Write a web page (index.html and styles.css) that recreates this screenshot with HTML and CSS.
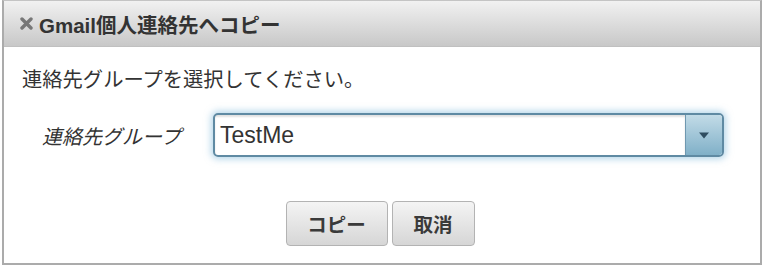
FILE: index.html
```html
<!DOCTYPE html>
<html lang="ja">
<head>
    <meta charset="UTF-8">
    <meta name="viewport" content="width=device-width, initial-scale=1.0">
    <title>Gmail個人連絡先へコピー</title>
    <link rel="stylesheet" href="styles.css">
</head>
<body>
<div class="dialog">
    <!-- Title bar -->
    <div class="dialog-title">
        <svg class="close-icon" width="13" height="13" viewBox="0 0 13 13">
            <path d="M2 2 L11 11 M11 2 L2 11" stroke="#777777" stroke-width="3.4" stroke-linecap="round"/>
        </svg>
        <span>Gmail個人連絡先へコピー</span>
    </div>

    <div class="dialog-body">
        <p class="message">連絡先グループを選択してください。</p>

        <div class="form-row">
            <label class="field-label">連絡先グループ</label>
            <div class="select-box">
                <div class="select-value">TestMe</div>
                <div class="select-arrow">
                    <svg width="12" height="7" viewBox="0 0 12 7">
                        <path d="M1 0.5 L11 0.5 L6 6.5 Z" fill="#2f4d60"/>
                    </svg>
                </div>
            </div>
        </div>

        <div class="button-row">
            <button class="dialog-button btn-copy" type="button">コピー</button>
            <button class="dialog-button btn-cancel" type="button">取消</button>
        </div>
    </div>
</div>
</body>
</html>
```

FILE: styles.css
```css
body {
    margin: 0;
    background-color: #ffffff;
    font-family: "Liberation Sans", "Noto Sans CJK JP", sans-serif;
    color: #333333;
}

.dialog {
    box-sizing: border-box;
    width: 760px;
    height: 265px;
    margin-left: 2px;
    border: 2px solid #ababab;
    border-top: 1px solid #c4c4c4;
    display: flex;
    flex-direction: column;
    background-color: #ffffff;
}

.dialog-title {
    height: 45px;
    flex-shrink: 0;
    display: flex;
    align-items: center;
    gap: 6px;
    padding-left: 16px;
    background: linear-gradient(#f1f1f1, #c8c8c8);
    border-bottom: 1px solid #c0c0c0;
    font-size: 20.5px;
    font-weight: bold;
    color: #333333;
}

.close-icon {
    display: block;
}

.dialog-body {
    padding: 19px 18px 0 18px;
}

.message {
    margin: 0;
    font-size: 20.3px;
    line-height: 28px;
    color: #333333;
}

.form-row {
    display: flex;
    align-items: center;
    margin-top: 19px;
}

.field-label {
    width: 191px;
    padding-left: 20px;
    box-sizing: border-box;
    font-size: 20px;
    font-style: italic;
    color: #333333;
}

.select-box {
    box-sizing: border-box;
    width: 511px;
    height: 44px;
    display: flex;
    border: 2px solid #5f8aa3;
    border-radius: 5px;
    box-shadow: 0 0 7px 2px rgba(120, 180, 215, 0.55);
    overflow: hidden;
}

.select-value {
    flex: 1;
    display: flex;
    align-items: center;
    padding-left: 5px;
    font-size: 23px;
    color: #333333;
    box-shadow: inset 0 2px 2px rgba(0, 0, 0, 0.12);
}

.select-arrow {
    width: 36px;
    display: flex;
    align-items: center;
    justify-content: center;
    border-left: 1px solid #6f98b0;
    background: linear-gradient(#c2dbe7, #80b0c8);
}

.select-arrow svg {
    display: block;
}

.button-row {
    display: flex;
    justify-content: center;
    gap: 4px;
    margin-top: 44px;
    padding-right: 4px;
}

.dialog-button {
    box-sizing: border-box;
    height: 45px;
    border: 1px solid #b3b3b3;
    border-radius: 4px;
    background: linear-gradient(#f4f4f4, #d6d6d6);
    font-family: "Liberation Sans", "Noto Sans CJK JP", sans-serif;
    font-size: 19.5px;
    font-weight: bold;
    color: #3a3a3a;
    cursor: pointer;
}

.btn-copy {
    width: 102px;
}

.btn-cancel {
    width: 83px;
}
```
